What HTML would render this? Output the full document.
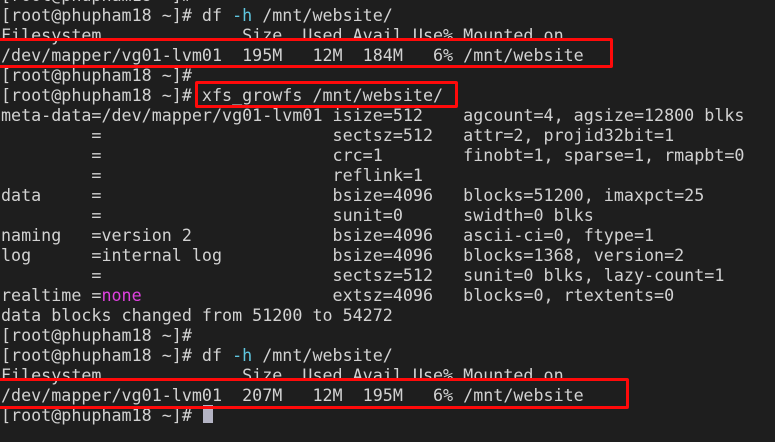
<!DOCTYPE html>
<html><head><meta charset="utf-8"><style>
html,body{margin:0;padding:0;background:#1e1e1e;width:775px;height:442px;overflow:hidden;}
pre{position:absolute;left:1px;top:-15px;margin:0;font-family:"DejaVu Sans Mono","Liberation Mono",monospace;font-size:16.7px;line-height:20px;color:#d2d2d2;}
.c{color:#5fc7e0}.m{color:#e040e0}
.box{position:absolute;border:3px solid #ff0a0a;border-radius:2px;}
.cur{position:absolute;left:203px;top:405px;width:10px;height:18px;background:#b4b4c4;}
</style></head><body>
<pre>[root@phupham18 ~]#
[root@phupham18 ~]# df <span class="c">-h</span> /mnt/website/
Filesystem              Size  Used Avail Use% Mounted on
/dev/mapper/vg01-lvm01  195M   12M  184M   6% /mnt/website
[root@phupham18 ~]#
[root@phupham18 ~]# xfs_growfs /mnt/website/
meta-data=/dev/mapper/vg01-lvm01 isize=512    agcount=4, agsize=12800 blks
         =                       sectsz=512   attr=2, projid32bit=1
         =                       crc=1        finobt=1, sparse=1, rmapbt=0
         =                       reflink=1
data     =                       bsize=4096   blocks=51200, imaxpct=25
         =                       sunit=0      swidth=0 blks
naming   =version 2              bsize=4096   ascii-ci=0, ftype=1
log      =internal log           bsize=4096   blocks=1368, version=2
         =                       sectsz=512   sunit=0 blks, lazy-count=1
realtime =<span class="m">none</span>                   extsz=4096   blocks=0, rtextents=0
data blocks changed from 51200 to 54272
[root@phupham18 ~]#
[root@phupham18 ~]# df <span class="c">-h</span> /mnt/website/
Filesystem              Size  Used Avail Use% Mounted on
/dev/mapper/vg01-lvm01  207M   12M  195M   6% /mnt/website
[root@phupham18 ~]# </pre>
<div class="cur"></div>
<div class="box" style="left:-3px;top:38px;width:610px;height:24px;"></div>
<div class="box" style="left:195px;top:81px;width:257px;height:21px;"></div>
<div class="box" style="left:-3px;top:378px;width:626px;height:25px;"></div>
</body></html>
